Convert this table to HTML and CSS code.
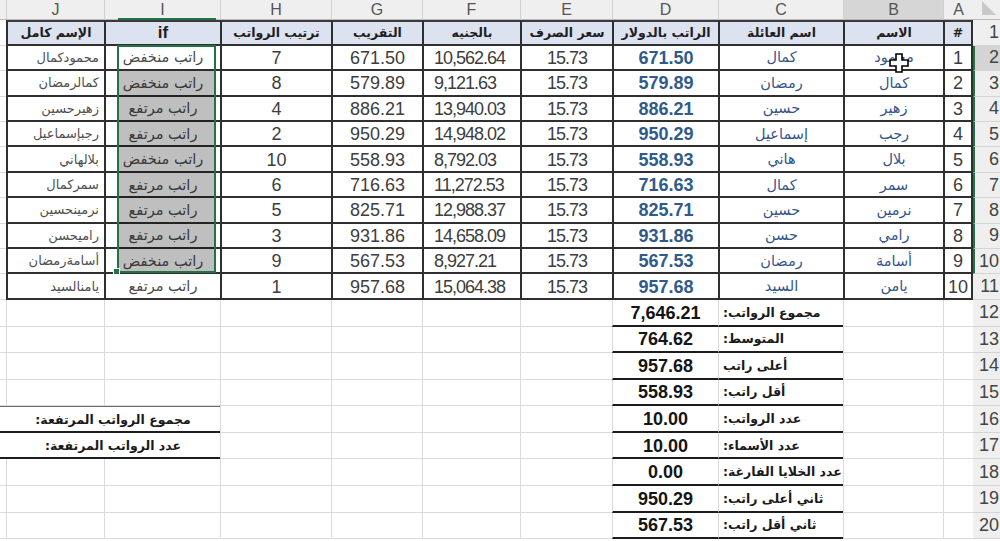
FILE: index.html
```html
<!DOCTYPE html>
<html lang="ar">
<head>
<meta charset="utf-8">
<title>Sheet</title>
<link rel="stylesheet" href="styles.css">
</head>
<body>
<div class="sheet">
  <!-- column letters -->
  <div class="col corner"><span class="tri"></span></div>
  <div class="col">A</div>
  <div class="col hot">B</div>
  <div class="col">C</div>
  <div class="col">D</div>
  <div class="col">E</div>
  <div class="col">F</div>
  <div class="col">G</div>
  <div class="col">H</div>
  <div class="col picked">I</div>
  <div class="col">J</div>
  <div class="col edge"></div>

  <!-- row 1 -->
  <div class="rh">1</div>
  <div class="tbl hdr first">#</div>
  <div class="tbl hdr">الاسم</div>
  <div class="tbl hdr">اسم العائلة</div>
  <div class="tbl hdr">الراتب بالدولار</div>
  <div class="tbl hdr">سعر الصرف</div>
  <div class="tbl hdr">بالجنيه</div>
  <div class="tbl hdr">التقريب</div>
  <div class="tbl hdr">ترتيب الرواتب</div>
  <div class="tbl hdr latin">if</div>
  <div class="tbl hdr">الإسم كامل</div>
  <div class="cell edge"></div>

  <!-- row 2 -->
  <div class="rh sel hot">2</div>
  <div class="tbl first num">1</div>
  <div class="tbl name">محمود</div>
  <div class="tbl name">كمال</div>
  <div class="tbl usd">671.50</div>
  <div class="tbl num rate">15.73</div>
  <div class="tbl num egp">10,562.64</div>
  <div class="tbl num">671.50</div>
  <div class="tbl num">7</div>
  <div class="tbl status">راتب منخفض</div>
  <div class="tbl full">محمودكمال</div>
  <div class="cell edge"></div>

  <!-- row 3 -->
  <div class="rh sel">3</div>
  <div class="tbl first num">2</div>
  <div class="tbl name">كمال</div>
  <div class="tbl name">رمضان</div>
  <div class="tbl usd">579.89</div>
  <div class="tbl num rate">15.73</div>
  <div class="tbl num egp">9,121.63</div>
  <div class="tbl num">579.89</div>
  <div class="tbl num">8</div>
  <div class="tbl status">راتب منخفض</div>
  <div class="tbl full">كمالرمضان</div>
  <div class="cell edge"></div>

  <!-- row 4 -->
  <div class="rh sel">4</div>
  <div class="tbl first num">3</div>
  <div class="tbl name">زهير</div>
  <div class="tbl name">حسين</div>
  <div class="tbl usd">886.21</div>
  <div class="tbl num rate">15.73</div>
  <div class="tbl num egp">13,940.03</div>
  <div class="tbl num">886.21</div>
  <div class="tbl num">4</div>
  <div class="tbl status">راتب مرتفع</div>
  <div class="tbl full">زهيرحسين</div>
  <div class="cell edge"></div>

  <!-- row 5 -->
  <div class="rh sel">5</div>
  <div class="tbl first num">4</div>
  <div class="tbl name">رجب</div>
  <div class="tbl name">إسماعيل</div>
  <div class="tbl usd">950.29</div>
  <div class="tbl num rate">15.73</div>
  <div class="tbl num egp">14,948.02</div>
  <div class="tbl num">950.29</div>
  <div class="tbl num">2</div>
  <div class="tbl status">راتب مرتفع</div>
  <div class="tbl full">رجبإسماعيل</div>
  <div class="cell edge"></div>

  <!-- row 6 -->
  <div class="rh sel">6</div>
  <div class="tbl first num">5</div>
  <div class="tbl name">بلال</div>
  <div class="tbl name">هاني</div>
  <div class="tbl usd">558.93</div>
  <div class="tbl num rate">15.73</div>
  <div class="tbl num egp">8,792.03</div>
  <div class="tbl num">558.93</div>
  <div class="tbl num">10</div>
  <div class="tbl status">راتب منخفض</div>
  <div class="tbl full">بلالهاني</div>
  <div class="cell edge"></div>

  <!-- row 7 -->
  <div class="rh sel">7</div>
  <div class="tbl first num">6</div>
  <div class="tbl name">سمر</div>
  <div class="tbl name">كمال</div>
  <div class="tbl usd">716.63</div>
  <div class="tbl num rate">15.73</div>
  <div class="tbl num egp">11,272.53</div>
  <div class="tbl num">716.63</div>
  <div class="tbl num">6</div>
  <div class="tbl status">راتب مرتفع</div>
  <div class="tbl full">سمركمال</div>
  <div class="cell edge"></div>

  <!-- row 8 -->
  <div class="rh sel">8</div>
  <div class="tbl first num">7</div>
  <div class="tbl name">نرمين</div>
  <div class="tbl name">حسين</div>
  <div class="tbl usd">825.71</div>
  <div class="tbl num rate">15.73</div>
  <div class="tbl num egp">12,988.37</div>
  <div class="tbl num">825.71</div>
  <div class="tbl num">5</div>
  <div class="tbl status">راتب مرتفع</div>
  <div class="tbl full">نرمينحسين</div>
  <div class="cell edge"></div>

  <!-- row 9 -->
  <div class="rh sel">9</div>
  <div class="tbl first num">8</div>
  <div class="tbl name">رامي</div>
  <div class="tbl name">حسن</div>
  <div class="tbl usd">931.86</div>
  <div class="tbl num rate">15.73</div>
  <div class="tbl num egp">14,658.09</div>
  <div class="tbl num">931.86</div>
  <div class="tbl num">3</div>
  <div class="tbl status">راتب مرتفع</div>
  <div class="tbl full">راميحسن</div>
  <div class="cell edge"></div>

  <!-- row 10 -->
  <div class="rh sel">10</div>
  <div class="tbl first num">9</div>
  <div class="tbl name">أسامة</div>
  <div class="tbl name">رمضان</div>
  <div class="tbl usd">567.53</div>
  <div class="tbl num rate">15.73</div>
  <div class="tbl num egp">8,927.21</div>
  <div class="tbl num">567.53</div>
  <div class="tbl num">9</div>
  <div class="tbl status">راتب منخفض</div>
  <div class="tbl full">أسامةرمضان</div>
  <div class="cell edge"></div>

  <!-- row 11 -->
  <div class="rh">11</div>
  <div class="tbl first num">10</div>
  <div class="tbl name">يامن</div>
  <div class="tbl name">السيد</div>
  <div class="tbl usd">957.68</div>
  <div class="tbl num rate">15.73</div>
  <div class="tbl num egp">15,064.38</div>
  <div class="tbl num">957.68</div>
  <div class="tbl num">1</div>
  <div class="tbl status">راتب مرتفع</div>
  <div class="tbl full">يامنالسيد</div>
  <div class="cell edge"></div>

  <!-- row 12 -->
  <div class="rh">12</div>
  <div class="cell"></div><div class="cell"></div>
  <div class="cell lbl">مجموع الرواتب:</div>
  <div class="cell val">7,646.21</div>
  <div class="cell"></div><div class="cell"></div><div class="cell"></div><div class="cell"></div><div class="cell"></div><div class="cell"></div>
  <div class="cell edge"></div>

  <!-- row 13 -->
  <div class="rh">13</div>
  <div class="cell"></div><div class="cell"></div>
  <div class="cell lbl">المتوسط:</div>
  <div class="cell val">764.62</div>
  <div class="cell"></div><div class="cell"></div><div class="cell"></div><div class="cell"></div><div class="cell"></div><div class="cell"></div>
  <div class="cell edge"></div>

  <!-- row 14 -->
  <div class="rh">14</div>
  <div class="cell"></div><div class="cell"></div>
  <div class="cell lbl">أعلى راتب</div>
  <div class="cell val">957.68</div>
  <div class="cell"></div><div class="cell"></div><div class="cell"></div><div class="cell"></div><div class="cell"></div><div class="cell"></div>
  <div class="cell edge"></div>

  <!-- row 15 -->
  <div class="rh">15</div>
  <div class="cell"></div><div class="cell"></div>
  <div class="cell lbl">أقل راتب:</div>
  <div class="cell val">558.93</div>
  <div class="cell"></div><div class="cell"></div><div class="cell"></div><div class="cell"></div><div class="cell"></div><div class="cell"></div>
  <div class="cell edge"></div>

  <!-- row 16 -->
  <div class="rh">16</div>
  <div class="cell"></div><div class="cell"></div>
  <div class="cell lbl">عدد الرواتب:</div>
  <div class="cell val">10.00</div>
  <div class="cell"></div><div class="cell"></div><div class="cell"></div><div class="cell"></div>
  <div class="cell note top">مجموع الرواتب المرتفعة:</div>
  <div class="cell edge under top"></div>

  <!-- row 17 -->
  <div class="rh">17</div>
  <div class="cell"></div><div class="cell"></div>
  <div class="cell lbl">عدد الأسماء:</div>
  <div class="cell val">10.00</div>
  <div class="cell"></div><div class="cell"></div><div class="cell"></div><div class="cell"></div>
  <div class="cell note">عدد الرواتب المرتفعة:</div>
  <div class="cell edge under"></div>

  <!-- row 18 -->
  <div class="rh">18</div>
  <div class="cell"></div><div class="cell"></div>
  <div class="cell lbl">عدد الخلايا الفارغة:</div>
  <div class="cell val">0.00</div>
  <div class="cell"></div><div class="cell"></div><div class="cell"></div><div class="cell"></div><div class="cell"></div><div class="cell"></div>
  <div class="cell edge"></div>

  <!-- row 19 -->
  <div class="rh">19</div>
  <div class="cell"></div><div class="cell"></div>
  <div class="cell lbl">ثاني أعلى راتب:</div>
  <div class="cell val">950.29</div>
  <div class="cell"></div><div class="cell"></div><div class="cell"></div><div class="cell"></div><div class="cell"></div><div class="cell"></div>
  <div class="cell edge"></div>

  <!-- row 20 -->
  <div class="rh">20</div>
  <div class="cell"></div><div class="cell"></div>
  <div class="cell lbl">ثاني أقل راتب:</div>
  <div class="cell val">567.53</div>
  <div class="cell"></div><div class="cell"></div><div class="cell"></div><div class="cell"></div><div class="cell"></div><div class="cell"></div>
  <div class="cell edge"></div>

  <!-- overlays: selection range, fill handle, mouse cursor -->
  <div class="selection"></div>
  <div class="handle"></div>
  <svg class="cursor" width="22" height="22" viewBox="0 0 22 22">
    <path d="M8 2h6v6h6v6h-6v6h-6v-6h-6v-6h6z" fill="#fff" stroke="#000" stroke-width="1.6" stroke-linejoin="miter"/>
  </svg>
</div>
</body>
</html>
```

FILE: styles.css
```css
* {
  box-sizing: border-box;
  margin: 0;
  padding: 0;
}

html, body {
  background: #ffffff;
}

body {
  width: 1000px;
  height: 541px;
  overflow: hidden;
  font-family: "Liberation Sans", "DejaVu Sans", sans-serif;
}

.sheet {
  position: relative;
  direction: rtl;
  display: grid;
  grid-template-columns: 27px 30px 100px 125px 106px 92px 98px 91px 111px 116px 98px 6px;
  grid-template-rows: 20px 25.7px repeat(10, 25.43px) repeat(9, 26.6px);
}

.sheet > div {
  display: flex;
  align-items: center;
  justify-content: center;
  white-space: nowrap;
  min-width: 0;
}

/* column letter headers */
.col {
  position: relative;
  background: #efefef;
  color: #555555;
  font-size: 16px;
  border-left: 1px solid #d0d0d0;
  border-bottom: 1px solid #b8b8b8;
}

.col.hot {
  background: #d6d6d6;
}

.col.picked::after {
  content: "";
  position: absolute;
  left: 13px;
  right: 4px;
  bottom: -1px;
  height: 2px;
  background: #217346;
}

.col.edge {
  border-left: none;
}

.corner {
  justify-content: flex-end;
  align-items: flex-end;
  padding: 0 0 3px 4px;
  border-left: none;
}

.tri {
  width: 0;
  height: 0;
  border-bottom: 14px solid #c9c9c9;
  border-right: 14px solid transparent;
}

/* row number headers */
.rh {
  background: #efefef;
  color: #444444;
  font-size: 18px;
  border-bottom: 1px solid #d4d4d4;
  overflow: hidden;
}

.sheet > .rh {
  justify-content: flex-start;
  padding-right: 1px;
}

.rh.hot {
  background: #d4d4d4;
}

.rh.sel {
  border-left: 2px solid #217346;
}

/* plain grid cells */
.cell {
  border-left: 1px solid #dadada;
  border-bottom: 1px solid #dadada;
}

.cell.edge {
  border-left: none;
}

/* bordered table */
.tbl {
  border-left: 2px solid #2f2f2f;
  border-bottom: 2px solid #2f2f2f;
  overflow: hidden;
}

.tbl.first {
  border-right: 2px solid #2f2f2f;
}

.hdr {
  background: #dce2ef;
  border-top: 2px solid #3a3a3a;
  color: #1f1f1f;
  font-family: "DejaVu Sans", sans-serif;
  font-weight: bold;
  font-size: 12.5px;
}

.hdr.latin {
  font-family: "Liberation Sans", sans-serif;
  font-size: 17px;
}

.num {
  font-size: 18px;
  color: #3d3d3d;
  padding-top: 2px;
}

.rate,
.egp {
  letter-spacing: -1px;
}

.sheet > .egp {
  justify-content: flex-end;
  padding-left: 10px;
}

.usd {
  font-size: 18px;
  font-weight: bold;
  color: #2f5b8b;
  padding-top: 2px;
}

.name {
  font-family: "DejaVu Sans", sans-serif;
  font-size: 14.5px;
  color: #34558a;
}

.status {
  font-family: "DejaVu Sans", sans-serif;
  font-size: 14.5px;
  color: #4a4a4a;
}

.sheet > .full {
  justify-content: flex-start;
  padding-right: 5px;
  font-family: "DejaVu Sans", sans-serif;
  font-size: 13px;
  color: #505050;
}

/* summary block */
.sheet > .lbl {
  justify-content: flex-end;
  padding-left: 4px;
  font-family: "DejaVu Sans", sans-serif;
  font-weight: bold;
  font-size: 12.5px;
  color: #1a1a1a;
  border-bottom: 2px solid #1c1c1c;
}

.val {
  font-size: 18px;
  font-weight: bold;
  color: #151515;
  border-bottom: 2px solid #1c1c1c;
  padding-top: 2px;
}

.note {
  grid-column: span 2;
  font-family: "DejaVu Sans", sans-serif;
  font-weight: bold;
  font-size: 12.5px;
  color: #1a1a1a;
  border-left: none;
  border-bottom: 2px solid #1c1c1c;
}

.under {
  border-bottom: 2px solid #1c1c1c;
}

.top {
  border-top: 1px solid #6a6a6a;
}

/* overlays */
.selection {
  position: absolute;
  left: 117px;
  top: 45px;
  width: 99px;
  height: 228px;
  border: 2px solid #217346;
  background: linear-gradient(to bottom, transparent 0, transparent 24px, rgba(0, 0, 0, 0.25) 24px);
}

.handle {
  position: absolute;
  left: 113px;
  top: 268px;
  width: 7px;
  height: 7px;
  background: #217346;
  border: 1px solid #ffffff;
}

.cursor {
  position: absolute;
  left: 888px;
  top: 52px;
}
```
